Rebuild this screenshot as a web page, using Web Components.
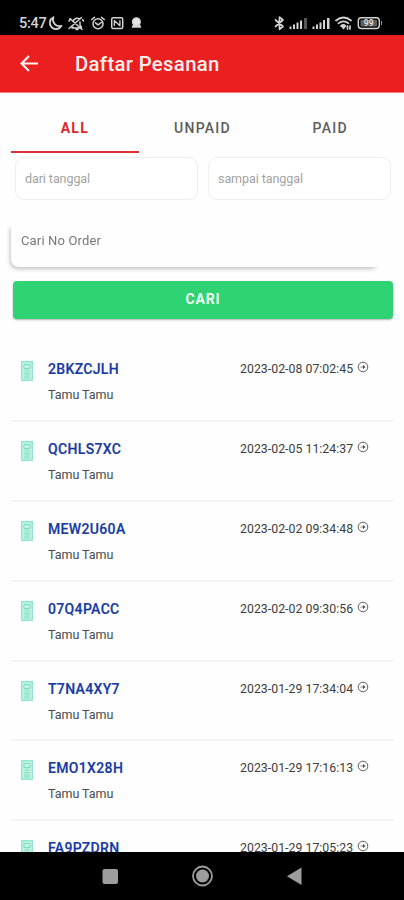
<!DOCTYPE html>
<html lang="id">
<head>
<meta charset="utf-8">
<title>Daftar Pesanan</title>
<style>
html,body{margin:0;height:100%;overflow:hidden;background:#fefefe}
body{font-family:Roboto,"Liberation Sans",sans-serif}
</style>
</head>
<body>
<order-app></order-app>
<script>
const define = (name, html, after) => customElements.define(name, class extends HTMLElement {
  connectedCallback() {
    if (this.shadowRoot) return;
    const root = this.attachShadow({mode: 'open'});
    root.innerHTML = html;
    if (after) after(this, root);
  }
});

define('status-bar', `<style>
:host{display:flex;justify-content:space-between;box-sizing:border-box;height:35px;padding:14px 22px 0 19px;background:#000;color:#d4d4d4;flex:none}
.time{font-size:14.5px;line-height:19px;letter-spacing:-.25px;width:29px;font-weight:500}
.left{display:flex}
svg{display:block}
</style>
<div class="left"><span class="time">5:47</span>
<svg width="96" height="19" viewBox="48 14 96 19" fill="none" stroke="#d4d4d4" stroke-width="1.5" stroke-linecap="round" stroke-linejoin="round">
<path d="M53.5 17.2a6.2 6.2 0 1 0 8 8.600a6.500 6.500 0 0 1-8-8.600z" stroke-width="1.800"/>
<path d="M69 28.500L81.500 17.500M73 21.500c1-3 4-4 7-2.500M73 27l-1 1h8.500M80 22v3l1.500 2.500M70 18.500l12 11M76 29.500h2M69 21l1-1.500M83.500 21l-1-1.500"/>
<circle cx="98" cy="23.800" r="5"/><path d="M91.700 19.500l2.800-2.200M104.300 19.500l-2.800-2.200M95.500 22.800l2.500 2 3.300-2.300"/>
<rect x="111.700" y="17.700" width="11" height="10.800" rx="1.500"/><path d="M114.300 25.500v-5l5.600 5.200v-5" stroke-width="1.300"/>
<path d="M132.500 27L134 24v-3.500q2.500-4 5 0V24l1.500 3z" fill="#e5e5e5"/><circle cx="136.400" cy="21.800" r="3.800" fill="#e5e5e5"/>
</svg></div>
<svg width="110" height="19" viewBox="272 14 110 19" fill="none" stroke="#d4d4d4" stroke-width="1.400" stroke-linecap="round" stroke-linejoin="round">
<path d="M275.500 20l7.500 6.500-3.500 2.800V17.200L283 20l-7.500 6.500" stroke-width="1.700"/>
<g stroke="none" fill="#d4d4d4"><path d="M289.500 26.500h2V29h-2zM293 24.500h2V29h-2zM296.500 22.500h2V29h-2zM300 20.500h2V29h-2z"/><path d="M304 18h3v11h-3z" fill="#565656"/>
<path d="M312.500 26.500h2V29h-2zM316 24.500h2V29h-2zM319.500 22.500h2V29h-2zM323 20h2V29h-2zM327 18h2.500v11h-2.500z"/></g>
<path d="M336 20.500q7.500-6 15 0M338.500 23.300q5-4 10 0M341 26q2.500-2 4.500 0M347.500 29v-3M350 26v3" stroke-width="1.700"/><path d="M342 26.500h3l-1.500 2z" fill="#d4d4d4"/>
<rect x="358.300" y="17.700" width="21" height="10.800" rx="3"/><path d="M382 21.500v3"/>
<rect x="360.500" y="19.700" width="16.500" height="6.800" rx="1" fill="#606060" stroke="none"/>
<text x="368.700" y="26.300" text-anchor="middle" fill="#e8e8e8" stroke="none" font-size="8.500" font-weight="500">99</text>
</svg>`);

define('app-header', `<style>
:host{display:flex;align-items:center;box-sizing:border-box;height:58px;padding:0 20px;background:#eb1f1f;border-bottom:1px solid #f57c7c;color:#fff0ee;flex:none}
svg{display:block;width:19px;height:17px;margin-right:36px}
h1{margin:0;font-size:20.300px;line-height:26px;font-weight:500;letter-spacing:.35px}
</style><svg viewBox="0 0 19 17" fill="none" stroke="#fff0ee" stroke-width="2.200"><path d="M18 8.500H2M9 1L1.500 8.500 9 16"/></svg><h1><slot></slot></h1>`);

define('tab-item', `<style>
:host{display:flex;flex:1;align-items:center;justify-content:center;box-sizing:border-box;height:60px;padding-top:11px;border-bottom:2px solid transparent;color:#5c5c5c;font-size:14px;font-weight:500;letter-spacing:1.250px}
:host([active]){color:#d92a2c;border-color:#dc3034;font-weight:700}
</style><slot></slot>`);

define('date-field', `<style>
:host{display:flex;flex:1;align-items:center;box-sizing:border-box;height:43px;padding:0 9px;border:1.500px solid #eee;border-radius:9px;background:#fff;color:#a2a2a2;font-size:12.500px;letter-spacing:-.07px}
</style><slot></slot>`);

define('search-box', `<style>
:host{display:block;height:54px;overflow:hidden;padding:0 16px 0 5px;margin:0 7px 0 6px;flex:none;-webkit-mask-image:linear-gradient(to right,#000 365px,transparent 375px)}
div{box-sizing:border-box;height:41px;padding:7px 10px;background:#fefefe;border-radius:0 0 8px 8px;color:#787878;font-size:13px;line-height:15px;letter-spacing:.15px;box-shadow:-1px 2px 4px rgba(0,0,0,.24)}
</style><div><slot></slot></div>`);

define('search-button', `<style>
:host{display:flex;align-items:center;justify-content:center;height:38px;margin:0 11px 0 13px;border-radius:4px;background:#2fd373;color:#effff5;font-size:14px;font-weight:700;letter-spacing:.8px;box-shadow:0 1px 2px rgba(0,0,0,.3);flex:none}
span{margin-top:-2px}
</style><span><slot></slot></span>`);

define('order-row', `<style>
:host{display:flex;box-sizing:border-box;height:79.900px;padding:19px 25px 0 10px;border-bottom:2px solid #f4f4f4;flex:none}
.doc{width:12px;height:20px;margin-right:15px}
svg{display:block;flex:none}
.info{flex:1}
b{display:block;font-size:14px;line-height:17px;font-weight:500;color:#173ba3;-webkit-text-stroke:.2px #173ba3;letter-spacing:.34px}
.name{display:block;margin-top:9px;font-size:12.500px;line-height:15px;color:#4b4b4b;letter-spacing:-.05px}
.date{width:117px;font-size:12.300px;line-height:16px;color:#3d3d3d;white-space:nowrap;letter-spacing:.03px}
</style>
<svg class="doc" viewBox="0 0 12 20" fill="none" stroke="#7adfc2"><rect x=".7" y=".7" width="10.600" height="18.600" fill="#c4f3e5" stroke="#8ee5cc" stroke-width="1.300"/><path d="M3 3.500h6v4H3zM3 10h2M7 10h2M3 12.500h2M7 12.500h2M3 15h2M7 15h2M3 17h6M6 8v9" stroke-width="1"/></svg>
<div class="info"><b></b></div>
<span class="date"></span>
<svg width="12" height="12" viewBox="0 0 12 12" fill="none" stroke="#5f5f5f"><circle cx="6" cy="6" r="4.800" stroke-width="1"/><path d="M3.500 6h4" stroke-width=".8"/><path d="M6 3.700L8.500 6 6 8.300z" fill="#555" stroke="none"/></svg>`, (el, root) => {
  root.querySelector('b').textContent = el.getAttribute('code');
  root.querySelector('.date').textContent = el.getAttribute('date');
  if (el.hasAttribute('name')) {
    const name = document.createElement('span');
    name.className = 'name';
    name.textContent = el.getAttribute('name');
    root.querySelector('.info').append(name);
  }
});

define('nav-bar', `<style>
:host{display:block;height:48px;background:#000;flex:none}
svg{display:block}
</style><svg width="404" height="48" viewBox="0 852 404 48"><rect x="102.500" y="869" width="15.500" height="15" rx="2" fill="#9d9d9d"/><circle cx="202.500" cy="876" r="9.500" fill="none" stroke="#9d9d9d" stroke-width="1.800"/><circle cx="202.500" cy="876" r="6.500" fill="#9d9d9d"/><path d="M301.500 867.500v17.500L287 876.200z" fill="#9d9d9d"/></svg>`);

define('order-app', `<style>
:host{display:flex;flex-direction:column;width:404px;height:900px;background:#fefefe}
main{display:flex;flex-direction:column;flex:1;min-height:0;overflow:hidden}
.tabs{display:flex;padding:0 10px 0 11px;flex:none}
.dates{display:flex;gap:10px;padding:4px 13px 0 15px;flex:none}
search-box{margin-top:26px}
search-button{margin-top:1px}
.list{display:flex;flex-direction:column;margin:23px 10px 0 11px;flex:none}
</style>
<status-bar></status-bar>
<app-header>Daftar Pesanan</app-header>
<main>
<div class="tabs"><tab-item active>ALL</tab-item><tab-item>UNPAID</tab-item><tab-item>PAID</tab-item></div>
<div class="dates"><date-field>dari tanggal</date-field><date-field>sampai tanggal</date-field></div>
<search-box>Cari No Order</search-box>
<search-button>CARI</search-button>
<div class="list">
<order-row code="2BKZCJLH" name="Tamu Tamu" date="2023-02-08 07:02:45"></order-row>
<order-row code="QCHLS7XC" name="Tamu Tamu" date="2023-02-05 11:24:37"></order-row>
<order-row code="MEW2U60A" name="Tamu Tamu" date="2023-02-02 09:34:48"></order-row>
<order-row code="07Q4PACC" name="Tamu Tamu" date="2023-02-02 09:30:56"></order-row>
<order-row code="T7NA4XY7" name="Tamu Tamu" date="2023-01-29 17:34:04"></order-row>
<order-row code="EMO1X28H" name="Tamu Tamu" date="2023-01-29 17:16:13"></order-row>
<order-row code="FA9PZDRN" date="2023-01-29 17:05:23"></order-row>
</div>
</main>
<nav-bar></nav-bar>`);
</script>
</body>
</html>
